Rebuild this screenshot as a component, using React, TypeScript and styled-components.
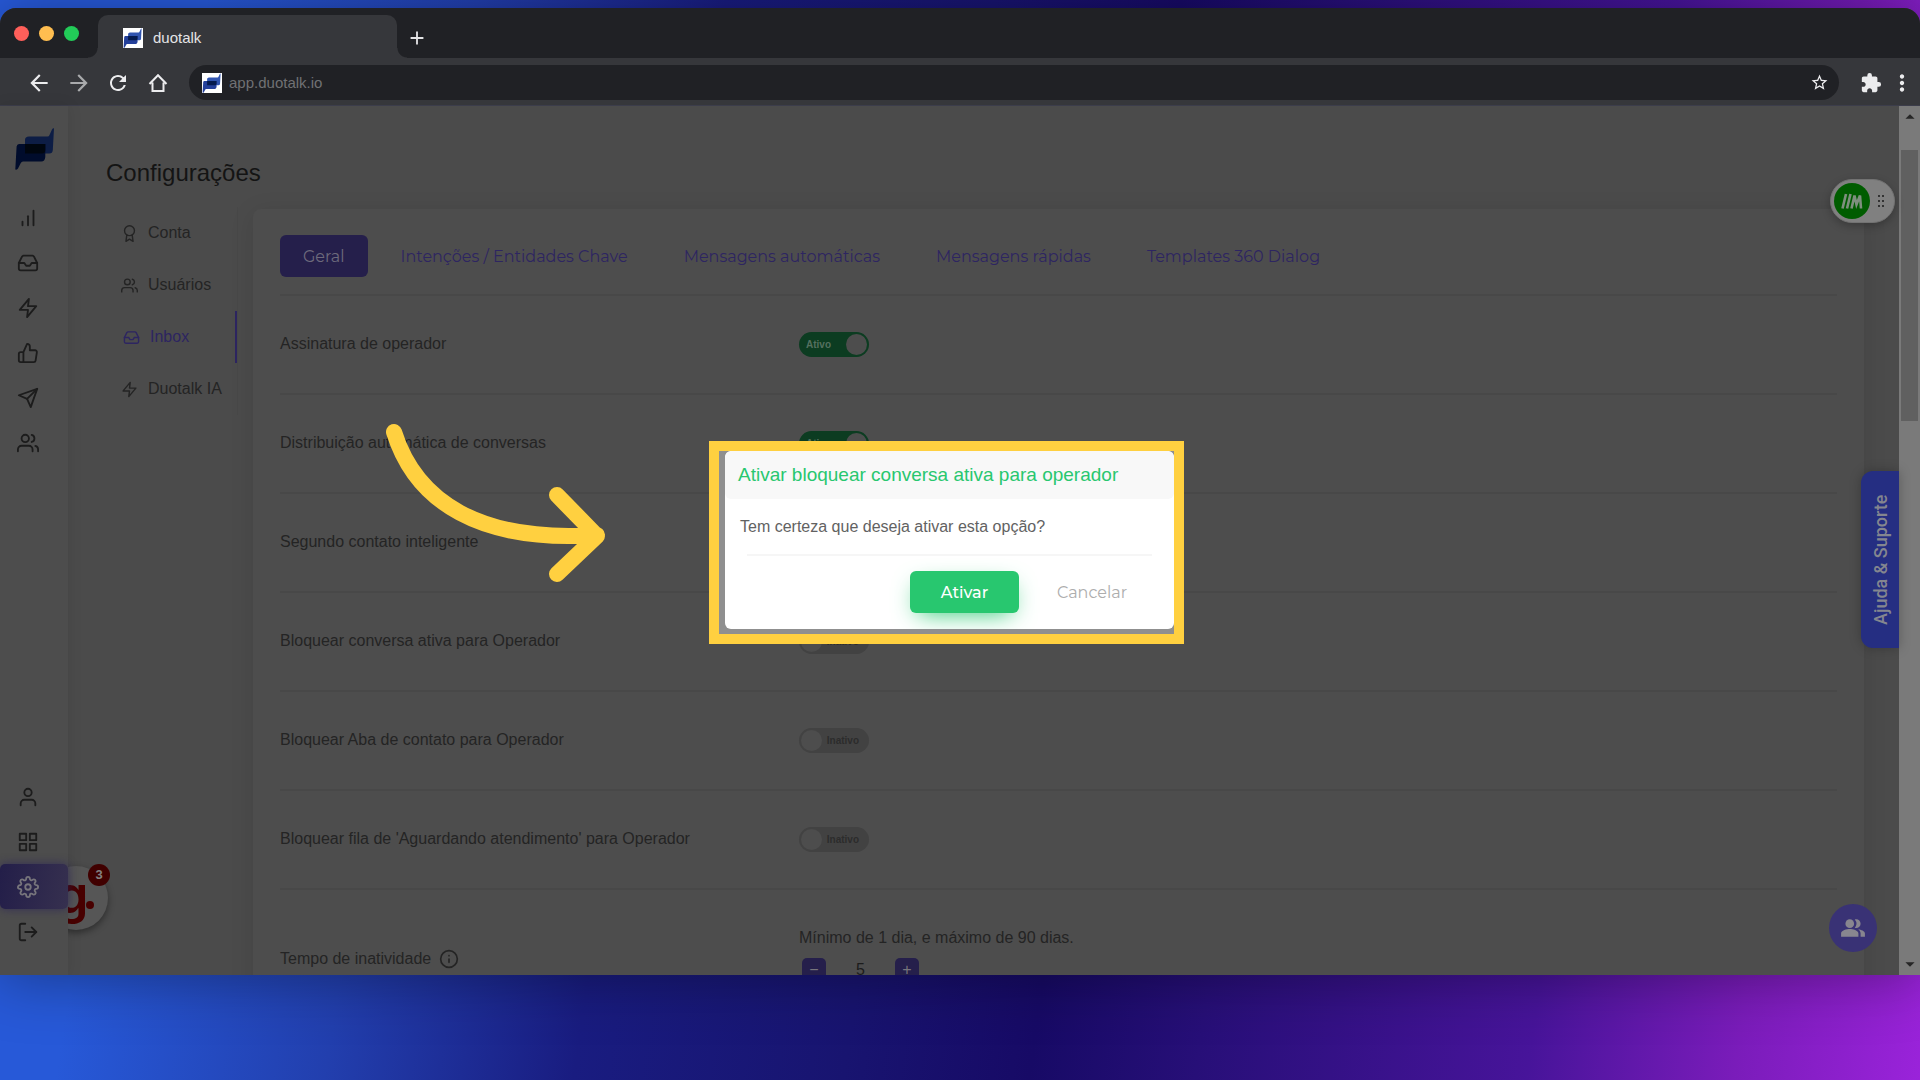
import React from "react";
import styled, { createGlobalStyle, css } from "styled-components";
import { FiBarChart, FiInbox, FiZap, FiThumbsUp, FiSend, FiUsers, FiUser, FiGrid, FiSettings, FiLogOut, FiAward, FiInfo } from "react-icons/fi";
import { MdArrowBack, MdArrowForward, MdRefresh, MdStarOutline, MdExtension, MdMoreVert, MdAdd, MdPeopleAlt, MdArrowDropDown, MdArrowDropUp } from "react-icons/md";

const sans = `"Liberation Sans", Arial, sans-serif`;
const brand = `Montserrat, Inter, sans-serif`;
const yellow = "#ffd040";

const Global = createGlobalStyle`
  * { box-sizing: border-box; }
  body { margin: 0; font-family: ${sans}; font-size: 16px; }
  button { font: inherit; border: 0; padding: 0; background: none; cursor: pointer; }
  a { color: inherit; text-decoration: none; }
`;

const Page = styled.div`
  position: relative;
  height: 100vh;
  overflow: hidden;
  padding: 8px 0 105px;
  background: linear-gradient(98deg, #2759d8 10%, #223fae 23%, #191c80 35%, #181470 48%, #170a66 57%, #270f78 65%, #47149a 81%, #7a1cba 91%, #9a23da 100%);
`;

const Browser = styled.div`
  height: 100%;
  display: flex;
  flex-direction: column;
  border-radius: 16px 16px 0 0;
  overflow: hidden;
  background: #4b4b4b;
  box-shadow: 0 4px 60px rgba(0, 0, 0, 0.35);
`;

const TabBar = styled.div`
  flex: none;
  height: 50px;
  display: flex;
  align-items: flex-end;
  background: #202125;
`;

const Lights = styled.div`
  width: 98px;
  height: 50px;
  padding-left: 14px;
  display: flex;
  gap: 10px;
  align-items: center;
`;

const Light = styled.span<{ $color: string }>`
  width: 15px;
  height: 15px;
  border-radius: 50%;
  background: ${(p) => p.$color};
`;

const BrowserTab = styled.div`
  position: relative;
  width: 299px;
  height: 43px;
  padding: 2px 0 0 25px;
  display: flex;
  align-items: center;
  gap: 10px;
  border-radius: 10px 10px 0 0;
  background: #36373b;
  color: #e4e4e6;
  font-size: 15px;
  &::before, &::after {
    content: "";
    position: absolute;
    bottom: 0;
    width: 10px;
    height: 10px;
  }
  &::before { left: -10px; background: radial-gradient(circle at 0 0, transparent 9px, #36373b 10px); }
  &::after { right: -10px; background: radial-gradient(circle at 100% 0, transparent 9px, #36373b 10px); }
`;

const NewTab = styled.button`
  width: 40px;
  height: 40px;
  display: grid;
  place-items: center;
  color: #e4e4e6;
`;

const Toolbar = styled.div`
  flex: none;
  height: 48px;
  padding: 2px 3px 0 24px;
  display: flex;
  align-items: center;
  background: #36373b;
  border-bottom: 1px solid #3c3d4b;
`;

const ToolButton = styled.button<{ $w: number; $dim?: boolean }>`
  width: ${(p) => p.$w}px;
  height: 34px;
  display: flex;
  align-items: center;
  justify-content: center;
  color: ${(p) => (p.$dim ? "#a9aaac" : "#ececee")};
`;

const NavButtons = styled.div`
  display: flex;
  gap: 10px;
  margin-right: 15px;
`;

const Address = styled.div`
  flex: 1;
  height: 35px;
  padding: 0 4px 0 13px;
  display: flex;
  align-items: center;
  gap: 7px;
  border-radius: 18px;
  background: #202125;
  margin-right: 16px;
`;

const AddressText = styled.input`
  flex: 1;
  border: 0;
  padding: 0;
  outline: 0;
  background: none;
  font: 15px ${sans};
  color: #707174;
`;

const Viewport = styled.div`
  flex: 1;
  min-height: 0;
  display: flex;
`;

const Sidebar = styled.aside`
  position: relative;
  z-index: 2;
  flex: none;
  width: 68px;
  display: flex;
  flex-direction: column;
  background: #4d4d4d;
  box-shadow: 0 0 15px rgba(0, 0, 0, 0.09);
  padding-bottom: 21px;
`;

const LogoSlot = styled.a`
  height: 89px;
  padding: 22px 0 0 15px;
`;

const Group = styled.nav<{ $bottom?: boolean }>`
  display: flex;
  flex-direction: column;
  ${(p) => p.$bottom && css`margin-top: auto;`}
`;

const SideLink = styled.a<{ $active?: boolean }>`
  height: 45px;
  padding-left: 17px;
  display: flex;
  align-items: center;
  color: #1c1c1c;
  ${(p) => p.$active && css`
    color: #77757c;
    border-radius: 5px;
    background: linear-gradient(100deg, #231e49, #36304f);
    box-shadow: 0 0 10px rgba(40, 32, 90, 0.7);
  `}
`;

const Main = styled.main`
  flex: 1;
  min-width: 0;
  overflow: hidden;
  padding: 49px 35px 0 13px;
`;

const Heading = styled.h1`
  margin: 0 0 18px 25px;
  font-size: 24px;
  line-height: 36px;
  font-weight: 400;
  color: #141414;
`;

const Columns = styled.div`
  display: grid;
  grid-template-columns: 157px minmax(0, 1fr);
  column-gap: 15px;
  align-items: start;
`;

const SubMenu = styled.nav`
  border-right: 1px solid #484848;
  margin-top: -2px;
`;

const SubLink = styled.a<{ $active?: boolean }>`
  height: 52px;
  padding-left: ${(p) => (p.$active ? 42 : 40)}px;
  display: flex;
  align-items: center;
  gap: 10px;
  color: ${(p) => (p.$active ? "#2d2561" : "#242424")};
  border-right: 2px solid ${(p) => (p.$active ? "#2d2561" : "transparent")};
`;

const Card = styled.section`
  height: 1200px;
  padding: 26px 27px;
  border-radius: 8px;
  background: #4d4d4d;
  box-shadow: 0 4px 25px rgba(0, 0, 0, 0.1);
`;

const Tabs = styled.div`
  display: flex;
  gap: 10px;
  height: 61px;
  border-bottom: 2px solid #484848;
`;

const Tab = styled.button<{ $active?: boolean }>`
  height: 42px;
  padding: 0 23px;
  border-radius: 6px;
  font-family: ${brand};
  font-size: 16px;
  color: ${(p) => (p.$active ? "#6d6a7c" : "#2d2561")};
  background: ${(p) => (p.$active ? "#251f4b" : "none")};
`;

const Row = styled.div<{ $tall?: boolean }>`
  height: ${(p) => (p.$tall ? 142 : 99)}px;
  display: grid;
  grid-template-columns: 519px 1fr;
  align-items: center;
  border-bottom: 2px solid #484848;
  color: #242424;
`;

const Label = styled.label`
  display: flex;
  align-items: center;
  gap: 8px;
  padding-bottom: 2px;
`;

const Switch = styled.span<{ $on: boolean }>`
  position: relative;
  width: 70px;
  height: 25px;
  display: flex;
  align-items: center;
  padding: 0 10px 0 7px;
  justify-content: ${(p) => (p.$on ? "flex-start" : "flex-end")};
  border-radius: 13px;
  background: ${(p) => (p.$on ? "#0c3c21" : "#424242")};
  color: ${(p) => (p.$on ? "#54705f" : "#2c2c2c")};
  font-size: 10px;
  font-weight: 700;
  &::after {
    content: "";
    position: absolute;
    top: 2px;
    ${(p) => (p.$on ? "right: 2px;" : "left: 2px;")}
    width: 21px;
    height: 21px;
    border-radius: 50%;
    background: #4d4d4d;
  }
`;

const SwitchInput = styled.input`
  position: absolute;
  inset: 0;
  width: 100%;
  height: 100%;
  margin: 0;
  opacity: 0;
`;

const Days = styled.div`
  display: flex;
  flex-direction: column;
  gap: 11px;
  padding-bottom: 9px;
`;

const Stepper = styled.div`
  display: flex;
  gap: 4px;
  padding-left: 3px;
`;

const StepButton = styled.button`
  width: 24px;
  height: 25px;
  border-radius: 5px;
  background: #251f4b;
  color: #77757c;
`;

const StepInput = styled.input`
  width: 61px;
  height: 25px;
  border: 0;
  padding: 0;
  background: none;
  text-align: center;
  font: 16px ${sans};
  color: #1c1c1c;
`;

const Scrollbar = styled.div`
  flex: none;
  width: 21px;
  display: flex;
  flex-direction: column;
  align-items: center;
  background: #7a7a7a;
  color: #262626;
`;

const Thumb = styled.div`
  width: 17px;
  height: 271px;
  margin: 22px 0 auto;
  background: #606060;
`;

const Bubble = styled.button`
  position: absolute;
  left: 44px;
  top: 866px;
  width: 64px;
  height: 64px;
  z-index: 1;
  display: flex;
  padding: 3px 0 0 12px;
  border-radius: 50%;
  background: #565656;
  box-shadow: 0 3px 7px rgba(0, 0, 0, 0.4);
  color: #480000;
  font: 600 52px/52px Inter, sans-serif;
`;

const BubbleDot = styled.span`
  width: 8px;
  height: 8px;
  margin: 32px 0 0 -3px;
  border-radius: 50%;
  background: #480000;
`;

const Count = styled.span`
  position: absolute;
  top: -2px;
  right: -2px;
  width: 22px;
  height: 22px;
  border-radius: 50%;
  background: #400000;
  color: #838080;
  font: 700 13px/22px ${sans};
  text-align: center;
`;

const Meeting = styled.button`
  position: absolute;
  right: 25px;
  top: 179px;
  width: 65px;
  height: 44px;
  padding: 0 10px 0 3px;
  display: flex;
  align-items: center;
  justify-content: space-between;
  border-radius: 22px;
  background: #808080;
  border: 1px solid #727272;
  box-shadow: 0 3px 8px rgba(0, 0, 0, 0.25);
`;

const Help = styled.button`
  position: absolute;
  right: 21px;
  top: 471px;
  width: 38px;
  height: 177px;
  border-radius: 0 12px 12px 0;
  background: #252e82;
  color: #84868f;
  font: 500 18px Roboto, sans-serif;
  writing-mode: vertical-rl;
  transform: rotate(180deg);
  box-shadow: 0 0 12px rgba(0, 0, 0, 0.25);
`;

const People = styled.button`
  position: absolute;
  right: 43px;
  top: 904px;
  width: 48px;
  height: 48px;
  border-radius: 50%;
  display: grid;
  place-items: center;
  background: #393275;
  color: #88868f;
`;

const Frame = styled.div`
  position: absolute;
  left: 709px;
  top: 441px;
  width: 475px;
  height: 203px;
  padding-left: 6px;
  border: 10px solid ${yellow};
  background: #8f8f8f;
`;

const Modal = styled.div`
  height: 178px;
  border-radius: 6px;
  background: #fff;
  overflow: hidden;
`;

const ModalTitle = styled.h2`
  margin: 0;
  padding-left: 13px;
  height: 48px;
  line-height: 48px;
  font-size: 19px;
  font-weight: 400;
  color: #28c76f;
  background: #f8f8f8;
  border-radius: 6px;
`;

const ModalText = styled.p`
  margin: 0 23px 0 15px;
  height: 55px;
  line-height: 56px;
  color: #626262;
`;

const Actions = styled.div`
  margin: 0 22px;
  padding-top: 15px;
  border-top: 2px solid #f6f6f6;
  display: flex;
  justify-content: flex-end;
`;

const ModalButton = styled.button<{ $primary?: boolean }>`
  width: ${(p) => (p.$primary ? 109 : 120)}px;
  margin-right: ${(p) => (p.$primary ? "13px" : "0")};
  height: 42px;
  border-radius: 6px;
  font-family: ${brand};
  font-weight: ${(p) => (p.$primary ? 500 : 400)};
  color: ${(p) => (p.$primary ? "#fff" : "#adadad")};
  background: ${(p) => (p.$primary ? "#28c76f" : "none")};
  box-shadow: ${(p) => (p.$primary ? "0 8px 25px -8px #28c76f" : "none")};
`;

const Arrow = styled.svg`
  position: absolute;
  left: 380px;
  top: 420px;
`;

const Mark = ({ size, dim }: { size: number; dim?: boolean }) => (
  <svg width={size} height={dim ? size + 3 : size} viewBox={dim ? "0 0 39 42" : "-1 -1 43 43"} aria-hidden="true">
    {!dim && <rect x="-1" y="-1" width="43" height="43" fill="#fff" />}
    <path d="M14 8.500h18.500q1.500 0 2-1.500L37 1.500Q37.800 0 39 .3L37.800 22q-.2 3.500-3.500 3.500H10V12q0-3.500 4-3.500z" fill={dim ? "#0d1d45" : "#3155b0"} />
    <path d="M4 16h26.300v13q-.5 4.500-4 4.500H8q-1.500 0-2.200 1.500L3 40.500Q2.200 42 .3 41.500L1.600 18.500Q2 16 4 16z" fill={dim ? "#000c2c" : "#24409b"} />
    <path d="M10 16h20.300v6q0 3.500-3.500 3.500H10z" fill={dim ? "#00060f" : "#051b4e"} />
  </svg>
);

const rows: [string, boolean][] = [
  ["Assinatura de operador", true],
  ["Distribuição automática de conversas", true],
  ["Segundo contato inteligente", true],
  ["Bloquear conversa ativa para Operador", false],
  ["Bloquear Aba de contato para Operador", false],
  ["Bloquear fila de 'Aguardando atendimento' para Operador", false],
];

const tabs = ["Geral", "Intenções / Entidades Chave", "Mensagens automáticas", "Mensagens rápidas", "Templates 360 Dialog"];

const topLinks = [
  { icon: FiBarChart, name: "Relatórios" },
  { icon: FiInbox, name: "Inbox" },
  { icon: FiZap, name: "Automação" },
  { icon: FiThumbsUp, name: "Avaliações" },
  { icon: FiSend, name: "Envios" },
  { icon: FiUsers, name: "Contatos" },
];

const bottomLinks = [
  { icon: FiUser, name: "Perfil" },
  { icon: FiGrid, name: "Aplicativos" },
  { icon: FiSettings, name: "Configurações", active: true },
  { icon: FiLogOut, name: "Sair" },
];

const subItems = [
  { icon: FiAward, text: "Conta" },
  { icon: FiUsers, text: "Usuários" },
  { icon: FiInbox, text: "Inbox" },
  { icon: FiZap, text: "Duotalk IA" },
];

export default function App() {
  return (
    <Page>
      <Global />
      <Browser>
        <TabBar>
          <Lights>
            <Light $color="#ff5f5a" />
            <Light $color="#ffbe50" />
            <Light $color="#22cb58" />
          </Lights>
          <BrowserTab>
            <Mark size={20} />
            duotalk
          </BrowserTab>
          <NewTab aria-label="Nova guia"><MdAdd size={22} /></NewTab>
        </TabBar>
        <Toolbar>
          <NavButtons>
            <ToolButton $w={30} aria-label="Voltar"><MdArrowBack size={26} /></ToolButton>
            <ToolButton $w={30} $dim aria-label="Avançar"><MdArrowForward size={26} /></ToolButton>
            <ToolButton $w={28} aria-label="Recarregar"><MdRefresh size={24} /></ToolButton>
            <ToolButton $w={32} aria-label="Início">
              <svg width="20" height="20" viewBox="0 0 20 20" fill="none" stroke="currentColor" strokeWidth="2">
                <path d="M1.5 11 10 2.2 18.500 11M4.500 9.500V18h11V9.500" />
              </svg>
            </ToolButton>
          </NavButtons>
          <Address>
            <Mark size={20} />
            <AddressText aria-label="Endereço" defaultValue="app.duotalk.io" />
            <ToolButton $w={32} aria-label="Favoritar"><MdStarOutline size={19} /></ToolButton>
          </Address>
          <ToolButton $w={32} aria-label="Extensões"><MdExtension size={22} /></ToolButton>
          <ToolButton $w={30} aria-label="Menu"><MdMoreVert size={26} /></ToolButton>
        </Toolbar>
        <Viewport>
          <Sidebar>
            <LogoSlot href="#" aria-label="Duotalk"><Mark size={39} dim /></LogoSlot>
            <Group>
              {topLinks.map(({ icon: Icon, name }) => (
                <SideLink href="#" key={name} aria-label={name}><Icon size={22} /></SideLink>
              ))}
            </Group>
            <Group $bottom>
              {bottomLinks.map(({ icon: Icon, name, active }) => (
                <SideLink href="#" key={name} aria-label={name} $active={active}><Icon size={22} /></SideLink>
              ))}
            </Group>
          </Sidebar>
          <Main>
            <Heading>Configurações</Heading>
            <Columns>
              <SubMenu>
                {subItems.map(({ icon: Icon, text }) => (
                  <SubLink href="#" key={text} $active={text === "Inbox"}><Icon size={17} />{text}</SubLink>
                ))}
              </SubMenu>
              <Card>
                <Tabs>
                  {tabs.map((t, i) => <Tab key={t} $active={i === 0}>{t}</Tab>)}
                </Tabs>
                {rows.map(([text, on], i) => (
                  <Row key={text}>
                    <Label htmlFor={`opt${i}`}>{text}</Label>
                    <Switch $on={on}>
                      <SwitchInput id={`opt${i}`} type="checkbox" defaultChecked={on} />
                      {on ? "Ativo" : "Inativo"}
                    </Switch>
                  </Row>
                ))}
                <Row $tall>
                  <Label htmlFor="days">Tempo de inatividade <FiInfo size={20} /></Label>
                  <Days>
                    <span>Mínimo de 1 dia, e máximo de 90 dias.</span>
                    <Stepper>
                      <StepButton aria-label="Diminuir">−</StepButton>
                      <StepInput id="days" defaultValue="5" />
                      <StepButton aria-label="Aumentar">+</StepButton>
                    </Stepper>
                  </Days>
                </Row>
              </Card>
            </Columns>
          </Main>
          <Scrollbar>
            <MdArrowDropUp size={22} />
            <Thumb />
            <MdArrowDropDown size={22} />
          </Scrollbar>
          <Bubble>g<BubbleDot /><Count>3</Count></Bubble>
        </Viewport>
      </Browser>
      <Meeting aria-label="Gravar reunião">
        <svg width="36" height="36" viewBox="0 0 36 36">
          <circle cx="18" cy="18" r="18" fill="#005c00" />
          <path d="M8.500 25.500 12 11M13 25.500 16.500 11M17.500 25.500 20.500 12.500l2 9L26 12.500l1 13" fill="none" stroke="#7e8f7e" strokeWidth="2.600" />
        </svg>
        <svg width="6" height="12" viewBox="0 0 6 12" fill="#333">
          {[0, 5, 10].map((y) => <g key={y}><rect y={y} width="2" height="2" /><rect x="4" y={y} width="2" height="2" /></g>)}
        </svg>
      </Meeting>
      <Help>Ajuda &amp; Suporte</Help>
      <People aria-label="Equipe"><MdPeopleAlt size={26} /></People>
      <Arrow width="240" height="180" viewBox="380 420 240 180" fill="none" stroke={yellow} strokeWidth="16" strokeLinecap="round" strokeLinejoin="round">
        <path d="M394 432C416 502 480 543 597 535M557 495l40 41-40 38" />
      </Arrow>
      <Frame>
        <Modal role="dialog" aria-labelledby="dialog-title">
          <ModalTitle id="dialog-title">Ativar bloquear conversa ativa para operador</ModalTitle>
          <ModalText>Tem certeza que deseja ativar esta opção?</ModalText>
          <Actions>
            <ModalButton $primary>Ativar</ModalButton>
            <ModalButton>Cancelar</ModalButton>
          </Actions>
        </Modal>
      </Frame>
    </Page>
  );
}
